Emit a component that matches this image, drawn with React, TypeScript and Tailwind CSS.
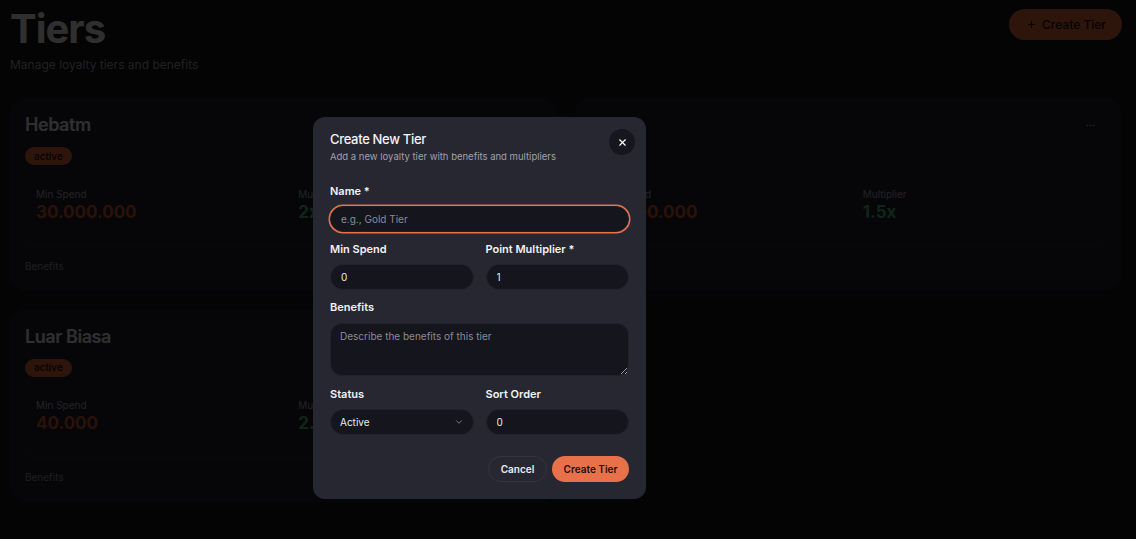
import { ChevronDown, MoreHorizontal, Plus, X } from "lucide-react";

const TIERS = [
  { id: 1, name: "Hebatm", status: "active", minSpend: "30.000.000", multiplier: "2x", menu: false },
  { id: 2, name: "Silver", status: "active", minSpend: "10.000.000", multiplier: "1.5x", menu: true },
  { id: 3, name: "Luar Biasa", status: "active", minSpend: "40.000", multiplier: "2.5x", menu: false },
];

function TierCard({ tier }: { tier: (typeof TIERS)[number] }) {
  return (
    <div className="rounded-[16px] bg-[#22222b] px-[15px] pt-[16px] pb-[18px]">
      <div className="flex items-start justify-between">
        <h3 className="text-[18px] leading-[24px] font-semibold tracking-tight text-[#ececef]">{tier.name}</h3>
        {tier.menu && (
          <button className="mt-[1px] mr-[5px] flex h-[22px] w-[22px] items-center justify-center rounded-full text-[#9a9aa6]">
            <MoreHorizontal size={11} />
          </button>
        )}
      </div>
      <span className="mt-[10px] inline-flex h-[18px] items-center rounded-full bg-[#e0683f] px-[9px] text-[10px] font-medium text-[#1b0f0a]">
        {tier.status}
      </span>
      <div className="mt-[12px] grid grid-cols-2 gap-2 rounded-[12px] border-b border-white/[0.06]">
        <div className="px-[11px] pt-[9px] pb-[23px]">
          <p className="text-[10px] leading-[14px] text-[#a7a7b3]">Min Spend</p>
          <p className="text-[17px] leading-[22px] font-bold text-[#c95a36]">{tier.minSpend}</p>
        </div>
        <div className="px-[11px] pt-[9px] pb-[23px]">
          <p className="text-[10px] leading-[14px] text-[#a7a7b3]">Multiplier</p>
          <p className="text-[17px] leading-[22px] font-bold text-[#4fb87c]">{tier.multiplier}</p>
        </div>
      </div>
      <p className="mt-[12px] text-[10px] leading-[14px] text-[#9494a0]">Benefits</p>
    </div>
  );
}

function Field({ label, children, mt = "mt-[7px]" }: { label: string; children: React.ReactNode; mt?: string }) {
  return (
    <div className="flex flex-col">
      <span className="text-[11px] leading-[15px] font-semibold text-[#f2f2f4]">{label}</span>
      <div className={mt}>{children}</div>
    </div>
  );
}

const inputCls =
  "block h-[26px] w-full rounded-full border border-[#22222c] bg-[#15151d] px-[10px] text-[10px] text-[#ececef] placeholder:text-[#8b8b95] outline-none";

export default function App() {
  return (
    <div className="relative h-screen overflow-hidden bg-[#14141a] font-['Inter',sans-serif]">
      <div className="pl-[10px] pr-[14px] pt-[9px]">
        {/* Header */}
        <div className="flex items-start justify-between">
          <div>
            <h1 className="text-[40px] leading-[40px] font-bold tracking-tight text-[#ebebeb]">Tiers</h1>
            <p className="mt-[8px] text-[12px] leading-[16px] text-[#a2a2ad]">Manage loyalty tiers and benefits</p>
          </div>
          <button className="flex h-[31px] items-center gap-[5px] rounded-full bg-[#e0683f] pl-[17px] pr-[16px] text-[12px] font-medium text-[#1b0f0a]">
            <Plus size={11} strokeWidth={2} />
            Create Tier
          </button>
        </div>

        {/* Tier cards */}
        <div className="mt-[24px] grid grid-cols-2 gap-x-[18px] gap-y-[18px] pr-[1px]">
          {TIERS.map((t) => (
            <TierCard key={t.id} tier={t} />
          ))}
        </div>
      </div>

      {/* Overlay */}
      <div className="absolute inset-0 bg-black/80" />

      {/* Dialog */}
      <div className="absolute left-[313px] top-[117px] w-[333px] rounded-[12px] bg-[#272732] px-[17px] pt-[13px] pb-[17px]">
        <button className="absolute right-[11px] top-[12px] flex h-[26px] w-[26px] items-center justify-center rounded-full bg-[#16161e] text-white">
          <X size={11} strokeWidth={2.5} />
        </button>
        <h2 className="text-[13px] leading-[18px] font-medium tracking-tight text-[#f4f4f6]">Create New Tier</h2>
        <p className="mt-[2px] text-[9.5px] leading-[14px] text-[#a0a0ab]">Add a new loyalty tier with benefits and multipliers</p>

        <div className="mt-[20px] flex flex-col gap-[10px]">
          <Field label="Name *" mt="mt-[7px]">
            <input
              className="block h-[26px] w-full rounded-full border border-[#1e1e28] bg-[#15151d] px-[10px] text-[10px] text-[#ececef] placeholder:text-[#8b8b95] outline-none ring-[1.5px] ring-[#e8714a]"
              placeholder="e.g., Gold Tier"
            />
          </Field>
          <div className="grid grid-cols-2 gap-[12px]">
            <Field label="Min Spend">
              <input className={inputCls} defaultValue="0" />
            </Field>
            <Field label="Point Multiplier *">
              <input className={inputCls} defaultValue="1" />
            </Field>
          </div>
          <Field label="Benefits" mt="mt-[8px]">
            <textarea
              className="block h-[53px] w-full rounded-[12px] border border-[#22222c] bg-[#15151d] px-[9px] py-[5px] text-[10px] text-[#ececef] placeholder:text-[#8b8b95] outline-none"
              placeholder="Describe the benefits of this tier"
            />
          </Field>
          <div className="mt-[1px] grid grid-cols-2 gap-[12px]">
            <Field label="Status">
              <div className="flex h-[26px] w-full items-center justify-between rounded-full border border-[#22222c] bg-[#15151d] pl-[9px] pr-[9px] text-[10px] text-[#ececef]">
                <span>Active</span>
                <ChevronDown size={10} className="text-[#8b8b95]" />
              </div>
            </Field>
            <Field label="Sort Order">
              <input className={inputCls} defaultValue="0" />
            </Field>
          </div>
        </div>

        <div className="mt-[21px] flex justify-end gap-[5px]">
          <button className="h-[26px] w-[59px] rounded-full border border-[#34343f] text-[10px] font-semibold text-[#ececef]">
            Cancel
          </button>
          <button className="h-[26px] w-[77px] rounded-full bg-[#e8714a] text-[10px] font-semibold text-[#1b1210]">
            Create Tier
          </button>
        </div>
      </div>
    </div>
  );
}
